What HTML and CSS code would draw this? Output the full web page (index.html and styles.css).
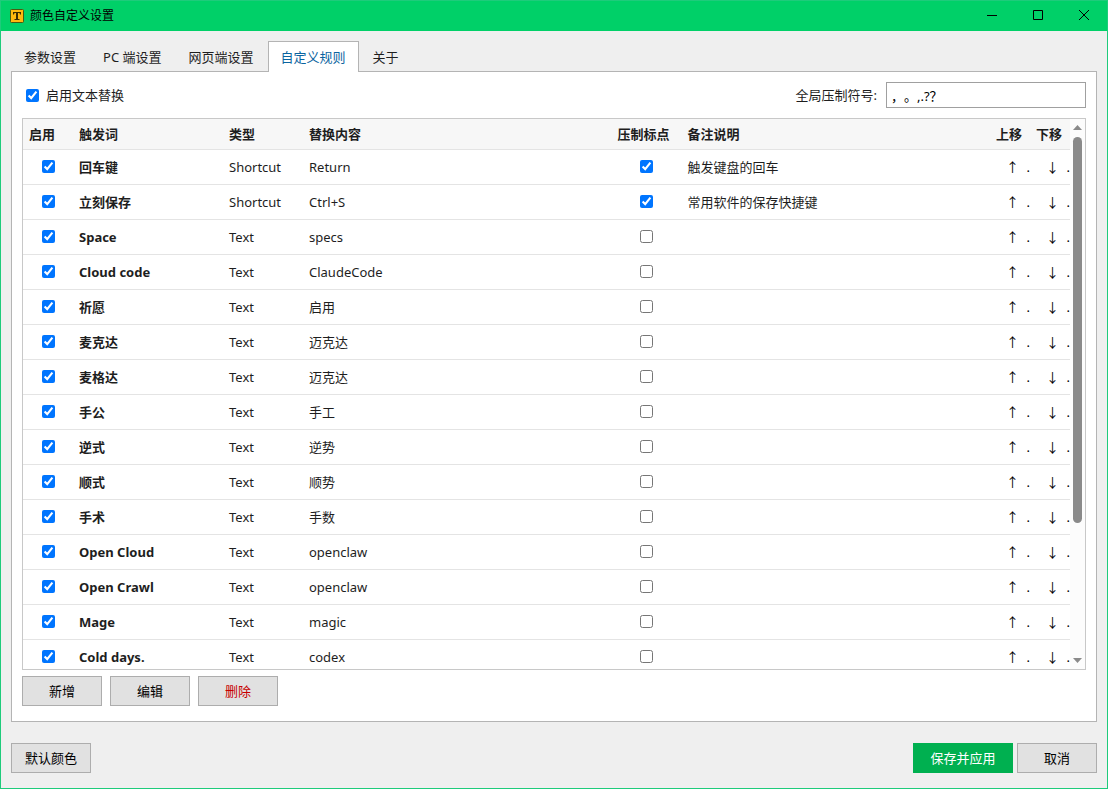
FILE: index.html
```html
<!DOCTYPE html>
<html lang="zh-CN">
<head>
    <meta charset="UTF-8">
    <meta name="viewport" content="width=device-width, initial-scale=1.0">
    <title>颜色自定义设置</title>
    <link rel="stylesheet" href="styles.css">
</head>
<body>
    <div class="window">
        <header class="titlebar">
            <svg class="app-icon" width="14" height="14" viewBox="0 0 14 14" aria-hidden="true">
                <rect x="0.5" y="0.5" width="13" height="13" rx="1" fill="#ffb90f" stroke="#4a5a10"/>
                <path d="M3 3h8v2.500h-1L9.500 4H8v6h1.500v1h-5v-1H6V4H4.500L4 5.500H3z" fill="#3a2c00"/>
            </svg>
            <h1>颜色自定义设置</h1>
            <div class="window-controls">
                <button type="button" aria-label="最小化">
                    <svg width="10" height="10" viewBox="0 0 10 10"><path d="M0 5.500h10"/></svg>
                </button>
                <button type="button" aria-label="最大化">
                    <svg width="10" height="10" viewBox="0 0 10 10"><path d="M0.500 0.500h9v9h-9z"/></svg>
                </button>
                <button type="button" aria-label="关闭">
                    <svg width="10" height="10" viewBox="0 0 10 10"><path d="M0 0l10 10M10 0L0 10"/></svg>
                </button>
            </div>
        </header>

        <main class="content">
            <nav class="tabs">
                <button type="button" class="tab">参数设置</button>
                <button type="button" class="tab">PC 端设置</button>
                <button type="button" class="tab">网页端设置</button>
                <button type="button" class="tab active">自定义规则</button>
                <button type="button" class="tab">关于</button>
            </nav>

            <section class="panel">
                <div class="options">
                    <label class="enable-label"><input type="checkbox" checked> 启用文本替换</label>
                    <div class="symbols">
                        <label for="symbols">全局压制符号:</label>
                        <input type="text" id="symbols" value="，。,.?？">
                    </div>
                </div>

                <div class="grid-box">
                    <div class="grid-scroll">
                        <table>
                            <colgroup>
                                <col class="col-enable">
                                <col class="col-trigger">
                                <col class="col-type">
                                <col>
                                <col class="col-suppress">
                                <col>
                                <col class="col-move">
                                <col class="col-move">
                            </colgroup>
                            <thead>
                                <tr>
                                    <th>启用</th>
                                    <th>触发词</th>
                                    <th>类型</th>
                                    <th>替换内容</th>
                                    <th>压制标点</th>
                                    <th>备注说明</th>
                                    <th>上移</th>
                                    <th>下移</th>
                                </tr>
                            </thead>
                            <tbody>
                                <tr>
                                    <td class="check"><input type="checkbox" aria-label="启用" checked></td>
                                    <td class="trigger">回车键</td><td>Shortcut</td><td>Return</td>
                                    <td class="check"><input type="checkbox" aria-label="压制标点" checked></td>
                                    <td>触发键盘的回车</td>
                                    <td class="move"><button type="button">↑<span>.</span></button></td>
                                    <td class="move"><button type="button">↓<span>.</span></button></td>
                                </tr>
                                <tr>
                                    <td class="check"><input type="checkbox" aria-label="启用" checked></td>
                                    <td class="trigger">立刻保存</td><td>Shortcut</td><td>Ctrl+S</td>
                                    <td class="check"><input type="checkbox" aria-label="压制标点" checked></td>
                                    <td>常用软件的保存快捷键</td>
                                    <td class="move"><button type="button">↑<span>.</span></button></td>
                                    <td class="move"><button type="button">↓<span>.</span></button></td>
                                </tr>
                                <tr>
                                    <td class="check"><input type="checkbox" aria-label="启用" checked></td>
                                    <td class="trigger">Space</td><td>Text</td><td>specs</td>
                                    <td class="check"><input type="checkbox" aria-label="压制标点"></td>
                                    <td></td>
                                    <td class="move"><button type="button">↑<span>.</span></button></td>
                                    <td class="move"><button type="button">↓<span>.</span></button></td>
                                </tr>
                                <tr>
                                    <td class="check"><input type="checkbox" aria-label="启用" checked></td>
                                    <td class="trigger">Cloud code</td><td>Text</td><td>ClaudeCode</td>
                                    <td class="check"><input type="checkbox" aria-label="压制标点"></td>
                                    <td></td>
                                    <td class="move"><button type="button">↑<span>.</span></button></td>
                                    <td class="move"><button type="button">↓<span>.</span></button></td>
                                </tr>
                                <tr>
                                    <td class="check"><input type="checkbox" aria-label="启用" checked></td>
                                    <td class="trigger">祈愿</td><td>Text</td><td>启用</td>
                                    <td class="check"><input type="checkbox" aria-label="压制标点"></td>
                                    <td></td>
                                    <td class="move"><button type="button">↑<span>.</span></button></td>
                                    <td class="move"><button type="button">↓<span>.</span></button></td>
                                </tr>
                                <tr>
                                    <td class="check"><input type="checkbox" aria-label="启用" checked></td>
                                    <td class="trigger">麦克达</td><td>Text</td><td>迈克达</td>
                                    <td class="check"><input type="checkbox" aria-label="压制标点"></td>
                                    <td></td>
                                    <td class="move"><button type="button">↑<span>.</span></button></td>
                                    <td class="move"><button type="button">↓<span>.</span></button></td>
                                </tr>
                                <tr>
                                    <td class="check"><input type="checkbox" aria-label="启用" checked></td>
                                    <td class="trigger">麦格达</td><td>Text</td><td>迈克达</td>
                                    <td class="check"><input type="checkbox" aria-label="压制标点"></td>
                                    <td></td>
                                    <td class="move"><button type="button">↑<span>.</span></button></td>
                                    <td class="move"><button type="button">↓<span>.</span></button></td>
                                </tr>
                                <tr>
                                    <td class="check"><input type="checkbox" aria-label="启用" checked></td>
                                    <td class="trigger">手公</td><td>Text</td><td>手工</td>
                                    <td class="check"><input type="checkbox" aria-label="压制标点"></td>
                                    <td></td>
                                    <td class="move"><button type="button">↑<span>.</span></button></td>
                                    <td class="move"><button type="button">↓<span>.</span></button></td>
                                </tr>
                                <tr>
                                    <td class="check"><input type="checkbox" aria-label="启用" checked></td>
                                    <td class="trigger">逆式</td><td>Text</td><td>逆势</td>
                                    <td class="check"><input type="checkbox" aria-label="压制标点"></td>
                                    <td></td>
                                    <td class="move"><button type="button">↑<span>.</span></button></td>
                                    <td class="move"><button type="button">↓<span>.</span></button></td>
                                </tr>
                                <tr>
                                    <td class="check"><input type="checkbox" aria-label="启用" checked></td>
                                    <td class="trigger">顺式</td><td>Text</td><td>顺势</td>
                                    <td class="check"><input type="checkbox" aria-label="压制标点"></td>
                                    <td></td>
                                    <td class="move"><button type="button">↑<span>.</span></button></td>
                                    <td class="move"><button type="button">↓<span>.</span></button></td>
                                </tr>
                                <tr>
                                    <td class="check"><input type="checkbox" aria-label="启用" checked></td>
                                    <td class="trigger">手术</td><td>Text</td><td>手数</td>
                                    <td class="check"><input type="checkbox" aria-label="压制标点"></td>
                                    <td></td>
                                    <td class="move"><button type="button">↑<span>.</span></button></td>
                                    <td class="move"><button type="button">↓<span>.</span></button></td>
                                </tr>
                                <tr>
                                    <td class="check"><input type="checkbox" aria-label="启用" checked></td>
                                    <td class="trigger">Open Cloud</td><td>Text</td><td>openclaw</td>
                                    <td class="check"><input type="checkbox" aria-label="压制标点"></td>
                                    <td></td>
                                    <td class="move"><button type="button">↑<span>.</span></button></td>
                                    <td class="move"><button type="button">↓<span>.</span></button></td>
                                </tr>
                                <tr>
                                    <td class="check"><input type="checkbox" aria-label="启用" checked></td>
                                    <td class="trigger">Open Crawl</td><td>Text</td><td>openclaw</td>
                                    <td class="check"><input type="checkbox" aria-label="压制标点"></td>
                                    <td></td>
                                    <td class="move"><button type="button">↑<span>.</span></button></td>
                                    <td class="move"><button type="button">↓<span>.</span></button></td>
                                </tr>
                                <tr>
                                    <td class="check"><input type="checkbox" aria-label="启用" checked></td>
                                    <td class="trigger">Mage</td><td>Text</td><td>magic</td>
                                    <td class="check"><input type="checkbox" aria-label="压制标点"></td>
                                    <td></td>
                                    <td class="move"><button type="button">↑<span>.</span></button></td>
                                    <td class="move"><button type="button">↓<span>.</span></button></td>
                                </tr>
                                <tr>
                                    <td class="check"><input type="checkbox" aria-label="启用" checked></td>
                                    <td class="trigger">Cold days.</td><td>Text</td><td>codex</td>
                                    <td class="check"><input type="checkbox" aria-label="压制标点"></td>
                                    <td></td>
                                    <td class="move"><button type="button">↑<span>.</span></button></td>
                                    <td class="move"><button type="button">↓<span>.</span></button></td>
                                </tr>
                            </tbody>
                        </table>
                    </div>
                    <div class="scrollbar" aria-hidden="true">
                        <svg width="9" height="5" viewBox="0 0 9 5"><path d="M0 5L4.500 0L9 5z"/></svg>
                        <div class="track"><div class="thumb"></div></div>
                        <svg width="9" height="5" viewBox="0 0 9 5"><path d="M0 0L4.500 5L9 0z"/></svg>
                    </div>
                </div>

                <div class="actions">
                    <button type="button" class="btn">新增</button>
                    <button type="button" class="btn">编辑</button>
                    <button type="button" class="btn danger">删除</button>
                </div>
            </section>
        </main>

        <footer class="footer">
            <button type="button" class="btn">默认颜色</button>
            <div class="footer-right">
                <button type="button" class="btn primary">保存并应用</button>
                <button type="button" class="btn">取消</button>
            </div>
        </footer>
    </div>
</body>
</html>
```
FILE: styles.css
```css
* {
    box-sizing: border-box;
}
body {
    margin: 0;
    font-family: "Noto Sans", "Noto Sans CJK SC", sans-serif;
    font-size: 13px;
    line-height: 18px;
    color: #1e1e1e;
}
button, input {
    font: inherit;
    color: inherit;
}
input[type="checkbox"] {
    width: 13px;
    height: 13px;
    margin: 0;
}
.window {
    display: flex;
    flex-direction: column;
    height: 100vh;
    border: 1px solid #1ecb7b;
    background: #efefef;
}

/* Title bar */
.titlebar {
    display: flex;
    align-items: center;
    height: 30px;
    flex-shrink: 0;
    padding-left: 9px;
    gap: 6px;
    background: #00d068;
    color: #000;
}
.titlebar h1 {
    flex: 1;
    margin: 0;
    font-size: 12px;
    font-weight: normal;
}
.window-controls {
    display: flex;
    align-self: stretch;
}
.window-controls button {
    display: flex;
    align-items: center;
    justify-content: center;
    width: 46px;
    padding: 0 0 2px;
    border: none;
    background: none;
}
.window-controls path {
    fill: none;
    stroke: #000;
}

/* Tabs */
.content {
    display: flex;
    flex-direction: column;
    flex: 1;
    min-height: 0;
    padding: 10px 10px 0;
}
.tabs {
    display: flex;
    gap: 1px;
}
.tab {
    height: 31px;
    margin-bottom: -1px;
    padding: 0 12px;
    border: 1px solid transparent;
    border-bottom: none;
    background: none;
}
.tab.active {
    border-color: #b4b4b4;
    background: #fff;
    color: #0a64a0;
    z-index: 1;
}
.panel {
    display: flex;
    flex-direction: column;
    flex: 1;
    min-height: 0;
    padding: 10px 10px 15px;
    border: 1px solid #b4b4b4;
    background: #fff;
}
.options {
    display: flex;
    justify-content: space-between;
    align-items: center;
    margin-bottom: 10px;
    padding-left: 4px;
}
.enable-label {
    display: flex;
    align-items: center;
    gap: 7px;
}
.symbols {
    display: flex;
    align-items: center;
    gap: 9px;
}
.symbols input {
    width: 200px;
    height: 26px;
    padding: 0 4px;
    border: 1px solid #a0a0a0;
    background: #fff;
    color: #000;
    text-spacing-trim: space-all; /* keep full-width punctuation full width */
}

/* Rules table */
.grid-box {
    display: flex;
    flex: 1;
    min-height: 0;
    border: 1px solid #c8c8c8;
}
.grid-scroll {
    flex: 1;
    overflow-x: hidden;
    overflow-y: auto;
    scrollbar-width: none;
}
table {
    width: 100%;
    table-layout: fixed;
    border-collapse: separate;
    border-spacing: 0;
}
.col-enable {
    width: 50px;
}
.col-trigger {
    width: 150px;
}
.col-type {
    width: 80px;
}
.col-suppress {
    width: 70px;
}
.col-move {
    width: 40px;
}
th, td {
    padding: 0 6px;
    border-bottom: 1px solid #e4e4e4;
    text-align: left;
    white-space: nowrap;
}
th {
    position: sticky;
    top: 0;
    height: 31px;
    background: #f7f7f7;
    font-weight: bold;
}
td {
    height: 35px;
}
.check {
    padding-bottom: 2px;
    text-align: center;
    line-height: 0;
}
.trigger {
    font-weight: bold;
}
.move {
    padding: 0;
    overflow: hidden;
}
.move button {
    display: flex;
    justify-content: flex-end;
    width: 100%;
    padding: 0;
    border: none;
    background: none;
    color: #000;
}
.move span {
    width: 11px;
    text-align: right;
}
.scrollbar {
    display: flex;
    flex-direction: column;
    align-items: center;
    width: 15px;
    padding: 6px 0;
    background: #fcfcfc;
}
.scrollbar path {
    fill: #8a8a8a;
}
.track {
    flex: 1;
    width: 9px;
    margin: 7px 0;
}
.thumb {
    height: 75%;
    border-radius: 5px;
    background: #8a8a8a;
}

/* Buttons */
.actions {
    display: flex;
    gap: 8px;
    margin-top: 6px;
}
.btn {
    min-width: 80px;
    height: 30px;
    padding: 0 12px;
    border: 1px solid #adadad;
    background: #e1e1e1;
    color: #000;
}
.btn.danger {
    color: #c80000;
}
.btn.primary {
    min-width: 100px;
    border-color: #00b050;
    background: #00b050;
    color: #fff;
}
.footer {
    display: flex;
    justify-content: space-between;
    padding: 21px 10px 15px;
}
.footer-right {
    display: flex;
    gap: 4px;
}
```
